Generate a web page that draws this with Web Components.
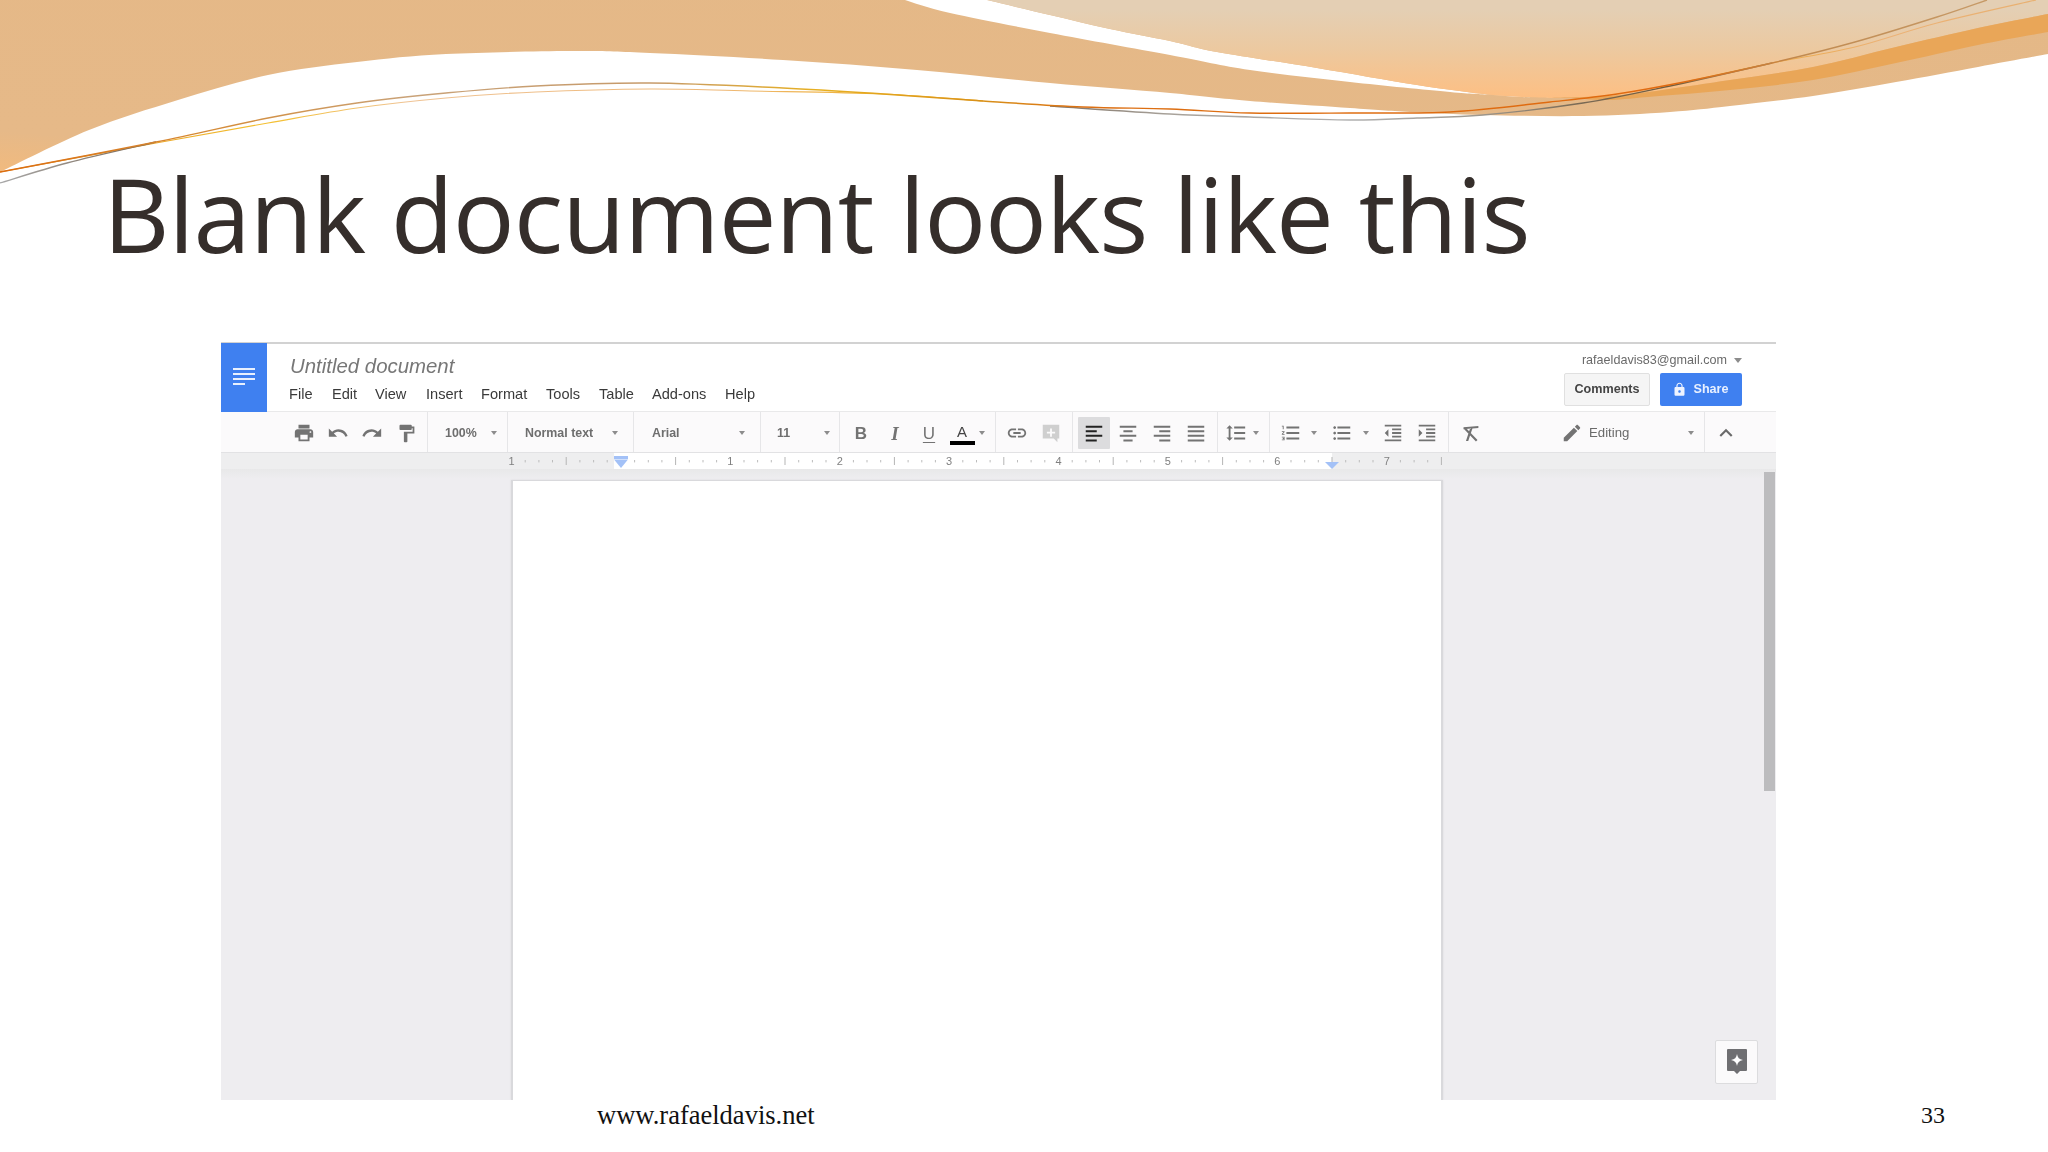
<!DOCTYPE html>
<html><head><meta charset="utf-8"><title>Blank document</title>
<style>html,body{margin:0;padding:0;background:#fff;overflow:hidden}</style></head>
<body>
<slide-page>
  <span slot="title">Blank document looks like this</span>
  <docs-window slot="window"></docs-window>
  <span slot="url">www.rafaeldavis.net</span>
  <span slot="num">33</span>
</slide-page>
<script>
const ICONS={
print:'M19 8H5c-1.66 0-3 1.34-3 3v6h4v4h12v-4h4v-6c0-1.66-1.34-3-3-3zm-3 11H8v-5h8v5zm3-7c-.55 0-1-.45-1-1s.45-1 1-1 1 .45 1 1-.45 1-1 1zm-1-9H6v4h12V3z',
undo:'M12.5 8c-2.65 0-5.05.99-6.9 2.6L2 7v9h9l-3.62-3.62c1.39-1.16 3.16-1.88 5.12-1.88 3.54 0 6.55 2.31 7.6 5.5l2.37-.78C21.08 11.03 17.15 8 12.5 8z',
redo:'M18.4 10.6C16.55 8.99 14.15 8 11.5 8c-4.65 0-8.58 3.03-9.96 7.22L3.9 16c1.05-3.19 4.05-5.5 7.6-5.5 1.95 0 3.73.72 5.12 1.88L13 16h9V7l-3.6 3.6z',
paint:'M18 4V3c0-.55-.45-1-1-1H5c-.55 0-1 .45-1 1v4c0 .55.45 1 1 1h12c.55 0 1-.45 1-1V6h1v4H9v11c0 .55.45 1 1 1h2c.55 0 1-.45 1-1v-9h8V4h-3z',
link:'M3.9 12c0-1.71 1.39-3.1 3.1-3.1h4V7H7c-2.76 0-5 2.24-5 5s2.24 5 5 5h4v-1.9H7c-1.71 0-3.1-1.39-3.1-3.1zM8 13h8v-2H8v2zm9-6h-4v1.9h4c1.71 0 3.1 1.39 3.1 3.1s-1.39 3.1-3.1 3.1h-4V17h4c2.76 0 5-2.24 5-5s-2.24-5-5-5z',
comment:'M3 3h18v15h-2v4l-4-4H3zM11 7v3.5H7.5v2H11V16h2v-3.5h3.5v-2H13V7z',
left:'M3 4h18v2.200H3zM3 9h12v2.200H3zM3 14h18v2.200H3zM3 19h12v2.200H3z',
center:'M3 4h18v2.200H3zM7 9h10v2.200H7zM3 14h18v2.200H3zM7 19h10v2.200H7z',
right:'M3 4h18v2.200H3zM9 9h12v2.200H9zM3 14h18v2.200H3zM9 19h12v2.200H9z',
justify:'M3 4h18v2.200H3zM3 9h18v2.200H3zM3 14h18v2.200H3zM3 19h18v2.200H3z',
spacing:'M6 7h2.500L5 3.500 1.500 7H4v10H1.500L5 20.500 8.500 17H6V7zm4-2v2h12V5H10zm0 14h12v-2H10v2zm0-6h12v-2H10v2z',
numbers:'M2 17h2v.5H3v1h1v.5H2v1h3v-4H2v1zm1-9h1V4H2v1h1v3zm-1 3h1.8L2 13.1v.9h3v-1H3.2L5 10.9V10H2v1zm5-6v2h14V5H7zm0 14h14v-2H7v2zm0-6h14v-2H7v2z',
bullets:'M4 10.5c-.83 0-1.5.67-1.5 1.5s.67 1.5 1.5 1.5 1.5-.67 1.5-1.5-.67-1.5-1.5-1.5zm0-6c-.83 0-1.5.67-1.5 1.5S3.17 7.5 4 7.5 5.5 6.83 5.5 6 4.83 4.5 4 4.5zm0 12c-.83 0-1.5.68-1.5 1.5s.68 1.5 1.5 1.5 1.5-.68 1.5-1.5-.67-1.5-1.5-1.5zM7 19h14v-2H7v2zm0-6h14v-2H7v2zm0-8v2h14V5H7z',
outdent:'M11 17h10v-2H11v2zm-8-5l4 4V8l-4 4zm0 9h18v-2H3v2zM3 3v2h18V3H3zm8 6h10V7H11v2zm0 4h10v-2H11v2z',
indent:'M3 21h18v-2H3v2zM3 8v8l4-4-4-4zm8 9h10v-2H11v2zM3 3v2h18V3H3zm8 6h10V7H11v2zm0 4h10v-2H11v2z',
clear:'M4 4.800l17-1.300v2.300l-6.800.5-.3 1-1.700 0 .4-.9L4 7zM4 6.300l1.700-1.600L20 19.300 18.200 21zM11.300 6.800h2.700L9.400 20.500H6.800z',
pencil:'M3 17.25V21h3.75L17.81 9.94l-3.75-3.75L3 17.25zM20.71 7.04c.39-.39.39-1.02 0-1.41l-2.34-2.34c-.39-.39-1.02-.39-1.41 0l-1.83 1.83 3.75 3.75 1.83-1.83z',
up:'M7.41 15.41L12 10.83l4.59 4.58L18 14l-6-6-6 6z',
lock:'M18 8h-1V6c0-2.76-2.24-5-5-5S7 3.24 7 6v2H6c-1.1 0-2 .9-2 2v10c0 1.1.9 2 2 2h12c1.1 0 2-.9 2-2V10c0-1.1-.9-2-2-2zm-6 9c-1.1 0-2-.9-2-2s.9-2 2-2 2 .9 2 2-.9 2-2 2zm3.1-9H8.9V6c0-1.71 1.39-3.1 3.1-3.1 1.71 0 3.1 1.39 3.1 3.1v2z'
};
function smooth(p){let d='';for(let i=0;i<p.length-1;i++){const a=p[i-1]||p[i],b=p[i],c=p[i+1],e=p[i+2]||c;
d+=`C${(b[0]+(c[0]-a[0])/6).toFixed(1)} ${(b[1]+(c[1]-a[1])/6).toFixed(1)} ${(c[0]-(e[0]-b[0])/6).toFixed(1)} ${(c[1]-(e[1]-b[1])/6).toFixed(1)} ${c[0]} ${c[1]}`}return d}
const line=p=>`M${p[0][0]} ${p[0][1]}`+smooth(p);
const rev=p=>p.slice().reverse();

class WaveBanner extends HTMLElement{connectedCallback(){
const lower=[[0,172],[89,130],[178,100],[268,75],[357,62],[446,54],[571,51],[650,53],[783,60],[917,70],[1050,83],[1170,93],[1250,101],[1350,108],[1410,112],[1483,115],[1583,116],[1670,112],[1730,106],[1813,96],[1896,82],[1978,67],[2048,54]];
const tanTop=[[905,0],[950,13],[1050,33],[1170,55],[1250,70],[1350,82],[1450,92],[1493,95],[1550,98]];
const peachEdge=[[987,0],[1050,15],[1110,29],[1170,41],[1217,52],[1317,68],[1417,85],[1493,95],[1550,98]];
const bandTop=[[1550,98],[1607,96],[1648,92],[1730,80],[1813,67],[1896,47],[1978,28],[2048,14]];
const bandLow=[[1570,98],[1607,100],[1648,97],[1730,90],[1813,80],[1896,63],[1978,45],[2048,32]];
const A=[[0,172],[156,142],[268,118],[357,103],[446,93],[536,86],[650,83],[783,88],[883,94],[983,101],[1083,107],[1170,109],[1250,113],[1350,113],[1450,112],[1550,102],[1617,94],[1689,81],[1772,63],[1855,42],[1937,17],[1987,0]];
const B=[[0,172],[156,143],[268,123],[357,108],[446,98],[536,92],[650,89],[750,91],[883,94],[983,101]];
const B2=[[1689,81],[1772,63],[1855,47],[1937,23],[2036,0]];
const C=[[0,183],[67,163],[156,142]];
const C2=[[1050,106],[1170,114],[1250,117],[1350,120],[1417,118],[1483,115],[1583,103],[1670,86],[1772,63]];
this.attachShadow({mode:'open'}).innerHTML=`<style>:host{display:block;width:2048px;height:200px}svg{display:block}</style>
<svg width="2048" height="200" viewBox="0 0 2048 200" aria-hidden="true">
<defs>
<linearGradient id="tan" x1="0" y1="1" x2="1" y2="0"><stop offset="0" stop-color="#f1ba7e"/><stop offset=".12" stop-color="#e6b988"/><stop offset="1" stop-color="#e4b887"/></linearGradient>
<linearGradient id="peach" gradientUnits="userSpaceOnUse" x1="0" y1="10" x2="0" y2="97"><stop offset="0" stop-color="#e4cfb4"/><stop offset=".45" stop-color="#ecc9a0"/><stop offset="1" stop-color="#fdbf83"/></linearGradient>
<linearGradient id="la" gradientUnits="userSpaceOnUse" x1="0" y1="0" x2="2048" y2="0"><stop offset="0" stop-color="#dc6d10"/><stop offset=".1" stop-color="#d58a35"/><stop offset=".2" stop-color="#c9a278"/><stop offset=".32" stop-color="#c69a6a"/><stop offset=".4" stop-color="#e8b020"/><stop offset=".48" stop-color="#d8901a"/><stop offset=".53" stop-color="#dc6f12"/><stop offset=".82" stop-color="#e06a10"/><stop offset=".88" stop-color="#c08a50"/><stop offset="1" stop-color="#c9a070"/></linearGradient>
<linearGradient id="lb" gradientUnits="userSpaceOnUse" x1="0" y1="0" x2="2048" y2="0"><stop offset="0" stop-color="#e08a20"/><stop offset=".13" stop-color="#f4c030"/><stop offset=".2" stop-color="#efc394"/><stop offset=".35" stop-color="#eeb878"/><stop offset=".45" stop-color="#f0b020"/><stop offset=".85" stop-color="#eca738"/><stop offset=".92" stop-color="#ecb276"/><stop offset="1" stop-color="#e8b070"/></linearGradient>
<linearGradient id="lc" gradientUnits="userSpaceOnUse" x1="0" y1="0" x2="2048" y2="0"><stop offset="0" stop-color="#a8a8a8"/><stop offset=".07" stop-color="#7c6a58"/><stop offset=".51" stop-color="#7c6e60"/><stop offset=".57" stop-color="#a8a29a"/><stop offset=".66" stop-color="#b0b0b0"/><stop offset=".72" stop-color="#a09a90"/><stop offset=".77" stop-color="#7a6a55"/><stop offset=".815" stop-color="#6e5c40"/><stop offset=".865" stop-color="#b08a58"/></linearGradient>
</defs>
<path fill="url(#tan)" d="M0 0H2048V54${smooth(rev(lower))}Z"/>
<path fill="#fff" d="${line(tanTop)}${smooth(rev(peachEdge))}Z"/>
<path fill="url(#peach)" d="${line(peachEdge)}${smooth(bandTop)}L2048 0Z"/>
<path fill="#e9a658" d="${line(bandTop)}L2048 32${smooth(rev(bandLow))}Z"/>
<path fill="none" stroke="url(#lb)" stroke-width="1.1" d="${line(B)}"/>
<path fill="none" stroke="url(#lb)" stroke-width="1.1" d="${line(B2)}"/>
<path fill="none" stroke="url(#lc)" stroke-width="1.3" d="${line(C)}"/>
<path fill="none" stroke="url(#lc)" stroke-width="1.4" d="${line(C2)}"/>
<path fill="none" stroke="url(#la)" stroke-width="1.4" d="${line(A)}"/>
</svg>`;}}
customElements.define('wave-banner',WaveBanner);

class SlidePage extends HTMLElement{connectedCallback(){
this.attachShadow({mode:'open'}).innerHTML=`<style>
:host{display:flex;flex-direction:column;width:2048px;height:1152px;position:relative;overflow:hidden;background:#fff}
wave-banner{position:absolute;left:0;top:0}
.title{height:342px;box-sizing:border-box;padding:147px 0 0 103px;font:400 103px/1.3 "Open Sans",sans-serif;color:#352e2b;position:relative;white-space:nowrap;letter-spacing:-1px}
.win{flex:0 0 758px;padding-left:221px;display:flex}
.foot{flex:1;display:flex;align-items:center;justify-content:space-between;padding:0 103px 22px 597px;font:24px/1 "Liberation Serif",serif;color:#111}
.u{font-size:26.5px}
</style>
<wave-banner></wave-banner>
<div class="title"><slot name="title"></slot></div>
<div class="win"><slot name="window"></slot></div>
<div class="foot"><span class="u"><slot name="url"></slot></span><slot name="num"></slot></div>`;}}
customElements.define('slide-page',SlidePage);

class TbIcon extends HTMLElement{connectedCallback(){
const n=this.getAttribute('name'),s=this.getAttribute('size')||22,c=this.getAttribute('color')||'#737373';
this.attachShadow({mode:'open'}).innerHTML=`<style>:host{display:inline-flex}svg{display:block}</style><svg width="${s}" height="${s}" viewBox="0 0 24 24"><path fill="${c}" d="${ICONS[n]}"/></svg>`;}}
customElements.define('tb-icon',TbIcon);

class TbBtn extends HTMLElement{connectedCallback(){
const n=this.getAttribute('name');
this.attachShadow({mode:'open'}).innerHTML=`<style>
:host{display:flex;width:var(--bw,34px);height:32px;align-items:center;justify-content:center;flex:none;color:#737373;font:700 17px/1 "Liberation Sans",sans-serif;box-sizing:border-box}
:host([active]){background:#dcdcde;border-radius:1px}
</style>${n?`<tb-icon name="${n}" size="${this.getAttribute('size')||22}" color="${this.getAttribute('color')||'#737373'}"></tb-icon>`:''}<slot></slot>`;}}
customElements.define('tb-btn',TbBtn);

class TbCaret extends HTMLElement{connectedCallback(){
this.attachShadow({mode:'open'}).innerHTML=`<style>:host{display:block;flex:none;width:0;height:0;border:var(--cw,3.5px) solid transparent;border-top:var(--ch,4px) solid #8c8c8c;border-bottom:0}</style>`;}}
customElements.define('tb-caret',TbCaret);

class TbGroup extends HTMLElement{connectedCallback(){
this.attachShadow({mode:'open'}).innerHTML=`<style>
:host{display:flex;align-items:center;box-sizing:border-box;height:40px;flex:none;border-right:1px solid #e6e6e8}
:host([last]){border-right:0}
.in{display:flex;align-items:center;width:100%;height:100%;padding-top:2px;box-sizing:border-box}
</style><div class="in"><slot></slot></div>`;}}
customElements.define('tb-group',TbGroup);

class TbDrop extends HTMLElement{connectedCallback(){
this.attachShadow({mode:'open'}).innerHTML=`<style>
:host{display:flex;flex:1;align-items:center;justify-content:space-between;height:100%;font:700 12.4px/1 "Liberation Sans",sans-serif;color:#6e6e6e}
</style><slot></slot><tb-caret></tb-caret>`;}}
customElements.define('tb-drop',TbDrop);

class DocToolbar extends HTMLElement{connectedCallback(){
this.attachShadow({mode:'open'}).innerHTML=`<style>
:host{display:flex;height:41px;box-sizing:border-box;background:#fbfafb;border-bottom:1px solid #e2e2e4;align-items:flex-start}
</style>
<tb-group style="width:207px;padding-left:66px">
 <tb-btn name="print"></tb-btn><tb-btn name="undo"></tb-btn><tb-btn name="redo"></tb-btn><tb-btn name="paint" size="21"></tb-btn>
</tb-group>
<tb-group style="width:80px;padding:0 10px 0 17px"><tb-drop>100%</tb-drop></tb-group>
<tb-group style="width:126px;padding:0 15px 0 17px"><tb-drop>Normal text</tb-drop></tb-group>
<tb-group style="width:127px;padding:0 15px 0 18px"><tb-drop>Arial</tb-drop></tb-group>
<tb-group style="width:79px;padding:0 9px 0 16px"><tb-drop>11</tb-drop></tb-group>
<tb-group style="width:156px;padding-left:4px">
 <tb-btn>B</tb-btn>
 <tb-btn style="font:italic 700 19px/1 'Liberation Serif',serif">I</tb-btn>
 <tb-btn style="font:400 17px/1 'Liberation Sans',sans-serif;text-decoration:underline;text-underline-offset:3px">U</tb-btn>
 <tb-btn style="--bw:28px;font:400 15px/1 'Liberation Sans',sans-serif;color:#444;flex-direction:column;gap:1px;padding-top:3px;margin-left:2px">A<span style="display:block;width:25px;height:4px;background:#000;margin-top:1px"></span></tb-btn>
 <tb-caret style="margin-left:3px"></tb-caret>
</tb-group>
<tb-group style="width:77px;padding-left:4px"><tb-btn name="link"></tb-btn><tb-btn name="comment" color="#cfcfcf"></tb-btn></tb-group>
<tb-group style="width:145px;padding-left:4px">
 <tb-btn name="left" color="#222" active style="--bw:32px;margin:0 1px 0 1px"></tb-btn><tb-btn name="center"></tb-btn><tb-btn name="right"></tb-btn><tb-btn name="justify"></tb-btn>
</tb-group>
<tb-group style="width:52px;padding-left:1px"><tb-btn name="spacing"></tb-btn><tb-caret></tb-caret></tb-group>
<tb-group style="width:179px;padding-left:4px">
 <tb-btn name="numbers"></tb-btn><tb-caret style="margin:0 10px 0 3px"></tb-caret><tb-btn name="bullets" style="--bw:30px"></tb-btn><tb-caret style="margin:0 7px 0 6px"></tb-caret><tb-btn name="outdent"></tb-btn><tb-btn name="indent"></tb-btn>
</tb-group>
<tb-group style="width:256px;padding:0 10px 0 4px">
 <tb-btn name="clear" size="21"></tb-btn>
 <tb-icon name="pencil" style="margin:0 6px 0 74px"></tb-icon>
 <tb-drop style="font:400 13.2px/1 'Liberation Sans',sans-serif;color:#6a6a6a">Editing</tb-drop>
</tb-group>
<tb-group last style="padding-left:4px"><tb-btn name="up" color="#6a6a6a" size="26"></tb-btn></tb-group>`;}}
customElements.define('doc-toolbar',DocToolbar);

class DocRuler extends HTMLElement{connectedCallback(){
const x0=290.500,inch=109.4;let s='';
for(let k=0;k<=68;k++){const x=+(x0+k*inch/8).toFixed(1);
 if(k%8===0){const lab=k/8-1;if(k/8>0&&lab===0)continue;const t=lab<0?1:lab;
   s+=`<text x="${x}" y="12" text-anchor="middle">${t}</text>`;}
 else if(k%4===0)s+=`<rect x="${x-.5}" y="4" width="1" height="8" fill="#b5b5b5"/>`;
 else s+=`<rect x="${x-.5}" y="7" width="1" height="2.4" fill="#bcbcbc"/>`;}
this.attachShadow({mode:'open'}).innerHTML=`<style>
:host{display:block;height:16px;background:#eeeeef;flex:none;position:relative}
svg{display:block}
text{font:400 11px "Liberation Sans",sans-serif;fill:#808080}
</style>
<svg width="1555" height="16" viewBox="0 0 1555 16">
<rect x="393" y="0" width="718" height="16" fill="#fff"/>
${s}
<path fill="#a3c1f7" d="M393 3h14v3h-14z"/><path fill="#a3c1f7" d="M393 6.500h14l-7 8.500z"/>
<path fill="#a3c1f7" d="M1104 9h14l-7 7z"/>
</svg>`;}}
customElements.define('doc-ruler',DocRuler);

class DocHeader extends HTMLElement{connectedCallback(){
const menus=[['File',289,332],['Edit',332,375],['View',375,426],['Insert',426,481],['Format',481,546],['Tools',546,599],['Table',599,652],['Add-ons',652,725],['Help',725,780]];
this.attachShadow({mode:'open'}).innerHTML=`<style>
:host{display:flex;height:70px;box-sizing:border-box;border-top:2px solid #d2d2d2;background:#fff;border-bottom:1px solid #e9e9ea;flex:none}
.logo{width:46px;height:70px;margin-top:-1px;background:#3f80f0;flex:none;display:flex;align-items:center;justify-content:center;padding-bottom:3px;box-sizing:border-box}
.mid{flex:1;padding:10px 0 0 23px;font-family:"Liberation Sans",sans-serif}
.name{font:italic 400 20.4px/24px "Liberation Sans",sans-serif;color:#777}
nav{display:flex;margin:6px 0 0 -1px;font:400 14.6px/20px "Liberation Sans",sans-serif;color:#3a3a3a}
nav span{flex:none}
.right{display:flex;flex-direction:column;align-items:flex-end;padding-right:34px;font-family:"Liberation Sans",sans-serif}
.mail{display:flex;align-items:center;gap:7px;font:400 12.6px/16px "Liberation Sans",sans-serif;color:#6a6a6a;margin-top:8px;--cw:4.5px;--ch:5px}
.btns{display:flex;gap:10px;margin-top:5px}
.b{height:33px;display:flex;align-items:center;justify-content:center;box-sizing:border-box;border-radius:2px;font:700 12.6px/1 "Liberation Sans",sans-serif}
.c{width:86px;background:#f5f5f5;border:1px solid #e0e0e0;color:#444}
.s{width:82px;background:#3f80f0;gap:6px;color:#e8f0ff;padding-right:1px}
</style>
<div class="logo"><svg width="22" height="21" viewBox="0 0 22 21"><path fill="#e8f0fe" d="M0 2h22v2H0zM0 7h22v2H0zM0 12h22v2H0zM0 17h12v2H0z"/></svg></div>
<div class="mid"><div class="name">Untitled document</div>
<nav>${menus.map(m=>`<span style="width:${m[2]-m[1]}px">${m[0]}</span>`).join('')}</nav></div>
<div class="right"><div class="mail">rafaeldavis83@gmail.com <tb-caret></tb-caret></div>
<div class="btns"><div class="b c">Comments</div><div class="b s"><tb-icon name="lock" size="15" color="#eef3ff"></tb-icon>Share</div></div></div>`;}}
customElements.define('doc-header',DocHeader);

class DocsWindow extends HTMLElement{connectedCallback(){
this.attachShadow({mode:'open'}).innerHTML=`<style>
:host{display:flex;flex-direction:column;width:1555px;height:758px;background:#edecef;filter:blur(.6px)}
.canvas{flex:1;position:relative;display:flex;min-height:0;overflow:hidden;background:linear-gradient(#e8e8e9 0,#eeedf0 10px)}
.page{width:932px;margin:11px 0 0 290px;background:#fff;box-sizing:border-box;border:1px solid #d9d9dc;border-width:1px 2px 0 2px;box-shadow:0 0 2px rgba(0,0,0,.08)}
.sp{flex:1}
.scroll{width:11px;height:319px;margin:3px 1px 0 0;background:#bcbcbe}
.fab{position:absolute;right:18px;bottom:16px;width:43px;height:44px;background:#fbfafb;border:1px solid #dcdcde;border-radius:2px;box-sizing:border-box;display:flex;align-items:center;justify-content:center}
</style>
<doc-header></doc-header><doc-toolbar></doc-toolbar><doc-ruler></doc-ruler>
<div class="canvas"><div class="page"></div><div class="sp"></div><div class="scroll"></div>
<div class="fab"><svg width="22" height="26" viewBox="0 0 22 26"><path fill="#6f6f72" d="M2 0h18a1 1 0 0 1 1 1v20a1 1 0 0 1-1 1h-6l-3 3-3-3H2a1 1 0 0 1-1-1V1a1 1 0 0 1 1-1z"/><path fill="#fff" d="M11 5c.5 3.500 2.200 5.500 6 6-3.800.5-5.500 2.500-6 6-.5-3.500-2.200-5.500-6-6 3.800-.5 5.500-2.500 6-6z"/></svg></div></div>`;}}
customElements.define('docs-window',DocsWindow);
</script>
</body></html>
